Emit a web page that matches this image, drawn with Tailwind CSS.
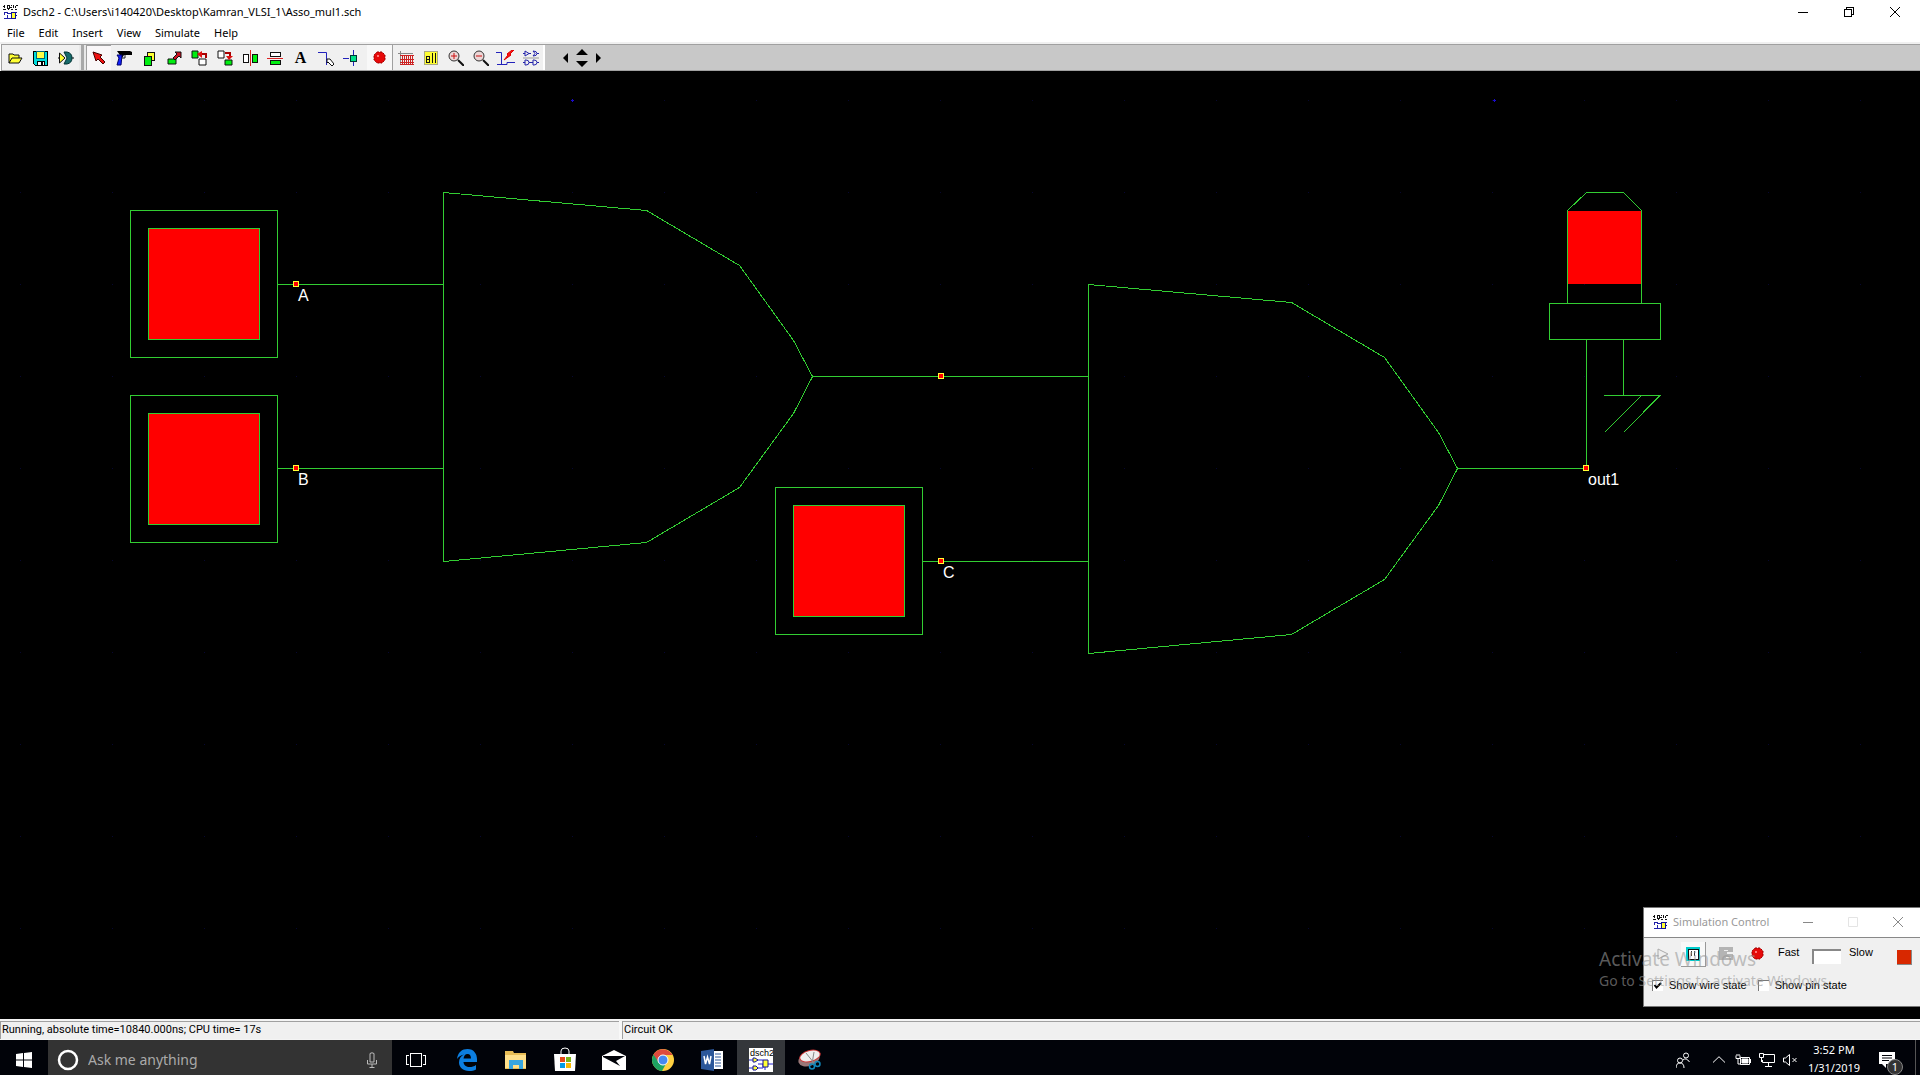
<!DOCTYPE html>
<html lang="en">
<head>
<meta charset="utf-8">
<title>Dsch2</title>
<script src="https://cdn.jsdelivr.net/npm/@tailwindcss/browser@4"></script>
</head>
<body class="flex h-screen flex-col overflow-hidden bg-black font-['Noto_Sans',sans-serif] text-[11px] text-black">

<svg class="hidden">
  <symbol id="app" viewBox="0 0 16 16" shape-rendering="crispEdges">
    <path d="M1 2h2M2 1v3M5 1h2v3H5zM8 3h2M9 1v1M11 1v3M13 2v2M14 1h1v1M1 5h3M6 5h1M9 5h2M13 5h2" stroke="#111" fill="none"/>
    <path d="M2 8h4M2 8v3M2 14h3M5 11v4M5 9h4M5 14h4" stroke="#22a" fill="none"/>
    <path d="M9 8h4v6H9z" fill="#ff3" stroke="#119"/><path d="M13 11h2M13 8h2" stroke="#119"/>
  </symbol>
  <symbol id="reddot" viewBox="0 0 16 16">
    <path d="M5 2h5l3 3v5l-3 3H5l-3-3V5z" fill="#e60a0a" stroke="#900" stroke-dasharray="2 1"/><path d="M5 5h2v2H5z" fill="#f77"/>
  </symbol>
</svg>

<header class="bg-white">
  <div class="flex h-6 items-center pr-[2px] pl-[2px]">
    <svg class="size-4"><use href="#app"/></svg>
    <h1 class="ml-[5px] flex-1">Dsch2 - C:\Users\i140420\Desktop\Kamran_VLSI_1\Asso_mul1.sch</h1>
    <div class="flex">
      <button class="flex h-5 w-[46px] items-center justify-center" aria-label="Minimize"><svg class="size-3" viewBox="0 0 12 12" shape-rendering="crispEdges"><path d="M1 6.500h10" stroke="#000"/></svg></button>
      <button class="flex h-5 w-[46px] items-center justify-center" aria-label="Restore"><svg class="size-3" viewBox="0 0 12 12" fill="none" stroke="#000" shape-rendering="crispEdges"><path d="M1.500 3.500h7v7h-7zM3.500 3.500v-2h7v7h-2"/></svg></button>
      <button class="flex h-5 w-[46px] items-center justify-center" aria-label="Close"><svg class="size-3" viewBox="0 0 12 12" stroke="#000"><path d="M1 1l10 10M11 1L1 11"/></svg></button>
    </div>
  </div>
  <nav class="flex h-[18px] items-center gap-[14px] pl-[7px]">
    <button>File</button><button>Edit</button><button>Insert</button><button>View</button><button>Simulate</button><button>Help</button>
  </nav>
</header>

<div class="flex h-[29px] items-stretch border-t-2 border-[#f0f0f0] bg-white pl-px">
  <div class="flex flex-1 border-y border-[#a0a0a0] bg-[#c8c8c8]">
    <div class="flex border-l border-[#a0a0a0] bg-[#f0f0f0]">
      <button class="flex w-[25px] items-center justify-center" aria-label="Open"><svg class="size-4" viewBox="0 0 16 16"><path d="M2 13V4h4l1 1h5v3M2 13l3-5h10l-3 5z" fill="#ff3" stroke="#111"/></svg></button>
      <button class="flex w-[25px] items-center justify-center" aria-label="Save"><svg class="size-4" viewBox="0 0 16 16" shape-rendering="crispEdges"><path d="M1 1h14v14H3l-2-2z" fill="#0dd" stroke="#000"/><path d="M4 1h8v7H4z" fill="#ff4" stroke="#067"/><path d="M5 11h7v4H5z" fill="#fff" stroke="#000"/><path d="M9 11h2v4H9z"/></svg></button>
      <button class="flex w-[27px] items-center justify-center" aria-label="Symbol"><svg class="size-4" viewBox="0 0 16 16"><path d="M0 8h2M13 8h3" stroke="#000"/><path d="M1.500 3v10L7 8z" fill="#ff3" stroke="#111"/><path d="M6 2h3q5 1 5 6t-5 6H6l3-6z" fill="#176a6a" stroke="#033"/></svg></button>
    </div>
    <div class="w-[7px] border-x-2 border-[#e8e8e8] bg-[#a8a8a8]"></div>
    <div class="flex border-r-2 border-white bg-[#f0f0f0]">
      <button class="flex w-[25px] items-center justify-center border-l border-t border-[#a0a0a0] bg-[#f9f7f8]" aria-label="Select"><svg class="size-4" viewBox="0 0 16 16"><path d="M2 2l9 3-2 2 5 5-2 2-5-5-2 2z" fill="#e11" stroke="#400"/></svg></button>
      <button class="flex w-[25px] items-center justify-center" aria-label="Delete"><svg class="size-4" viewBox="0 0 16 16"><path d="M1 1h13l2 1v3H8L6 8z"/><path d="M1 5h5L5 15H1L3 8z" fill="#12f" stroke="#006"/><path d="M6 8h3V5" stroke="#222" fill="none"/></svg></button>
      <button class="flex w-[25px] items-center justify-center" aria-label="Copy"><svg class="size-4" viewBox="0 0 16 16" stroke="#111" shape-rendering="crispEdges"><path d="M6 2h7v8H6z" fill="#ff3"/><path d="M3 6h7v9H3z" fill="#0e1"/></svg></button>
      <button class="flex w-[25px] items-center justify-center" aria-label="Move"><svg class="size-4" viewBox="0 0 16 16" stroke="#111"><path d="M2 9h8v5H2z" fill="#0e1"/><path d="M7 8l4-4-2-2h6v6l-2-2-4 4z" fill="#c12"/></svg></button>
      <button class="flex w-[26px] items-center justify-center" aria-label="Rotate left"><svg class="size-4" viewBox="0 0 16 16"><path d="M1 1h6v7H1z" fill="#0e1" stroke="#111"/><path d="M8 9h7v6H8z" fill="#fff" stroke="#111"/><path d="M15 8V4h-5" stroke="#a00" stroke-width="2" fill="none"/><path d="M11 1v7L6 4z" fill="#d11"/></svg></button>
      <button class="flex w-[25px] items-center justify-center" aria-label="Rotate right"><svg class="size-4" viewBox="0 0 16 16"><path d="M1 1h6v7H1z" fill="#fff" stroke="#111"/><path d="M8 10h7v5H8z" fill="#0e1" stroke="#111"/><path d="M8 3h5v4" stroke="#a00" stroke-width="2" fill="none"/><path d="M9 6h7l-4 4z" fill="#d11"/></svg></button>
      <button class="flex w-[25px] items-center justify-center" aria-label="Flip horizontal"><svg class="size-4" viewBox="0 0 16 16" shape-rendering="crispEdges"><path d="M1 4h5v8H1z" fill="#fff" stroke="#111"/><path d="M10 4h5v8h-5z" fill="#0e1" stroke="#111"/><path d="M8 0v16" stroke="#d22"/></svg></button>
      <button class="flex w-[26px] items-center justify-center" aria-label="Flip vertical"><svg class="size-4" viewBox="0 0 16 16" shape-rendering="crispEdges"><path d="M3 2h10v4H3z" fill="#fff" stroke="#111"/><path d="M3 10h10v4H3z" fill="#0e1" stroke="#111"/><path d="M0 8h16" stroke="#d22"/></svg></button>
      <button class="flex w-[25px] items-center justify-center font-['Liberation_Serif',serif] text-base font-bold" aria-label="Text">A</button>
      <button class="flex w-[25px] items-center justify-center" aria-label="Wire"><svg class="size-4" viewBox="0 0 16 16" fill="none"><path d="M0 2.500h8.500V15" stroke="#22b"/><path d="M9 9h3l4 5-2 2-4-4-1 1z" fill="#fff" stroke="#111"/></svg></button>
      <button class="flex w-[25px] items-center justify-center" aria-label="Connect"><svg class="size-4" viewBox="0 0 16 16" shape-rendering="crispEdges"><path d="M0 8h6M10 0v16" stroke="#22b"/><path d="M7 5h6v6H7z" fill="#0d8" stroke="#033"/></svg></button>
      <button class="ml-[4px] flex w-[26px] items-center justify-center border-r border-[#a0a0a0] bg-[#f8f8f8]" aria-label="Run simulation"><svg class="size-4"><use href="#reddot"/></svg></button>
      <button class="flex w-[25px] items-center justify-center" aria-label="Chronogram"><svg class="size-4" viewBox="0 0 16 16" shape-rendering="crispEdges"><path d="M2 1v14M0 3h15" stroke="#888"/><path d="M2 5h14M2 14h14M4 5v9M6 5v9M8 5v9M10 5v9M12 5v9M14 5v9M2 9h14M2 12h14" stroke="#c22"/></svg></button>
      <button class="flex w-[25px] items-center justify-center" aria-label="View all"><svg class="size-4" viewBox="0 0 16 16" shape-rendering="crispEdges"><path d="M1.500 1.500h13v13h-13z" fill="#ff3" stroke="#aa8"/><path d="M3 6h3v6H3zM3 9h3M9 3v10M12 3v10" fill="none" stroke="#111"/></svg></button>
      <button class="flex w-[25px] items-center justify-center" aria-label="Zoom in"><svg class="size-4" viewBox="0 0 16 16"><path d="M10 10l6 6" stroke="#111" stroke-width="2"/><circle cx="6" cy="6" r="5" fill="#ecd7d7" stroke="#333"/><path d="M3 6h6M6 3v6" stroke="#c11"/></svg></button>
      <button class="flex w-[25px] items-center justify-center" aria-label="Zoom out"><svg class="size-4" viewBox="0 0 16 16"><path d="M10 10l6 6" stroke="#111" stroke-width="2"/><circle cx="6" cy="6" r="5" fill="#ecd7d7" stroke="#333"/><path d="M3 6h6" stroke="#c11"/></svg></button>
      <button class="flex w-[25px] items-center justify-center" aria-label="Critical path"><svg class="h-4 w-5" viewBox="0 0 20 16" fill="none"><path d="M0 2.500h5.500v12H1M5 14.500h6v-2h8" stroke="#22b"/><path d="M16 0l-5 4 1 1-4 5 7-5-1-1 4-4z" fill="#f11" stroke="#d00"/></svg></button>
      <button class="flex w-[25px] items-center justify-center" aria-label="Library"><svg class="size-4" viewBox="0 0 16 16" fill="none" stroke="#22a"><path d="M2 1v5l4-2.500zM0 3.500h2M6 3.500h2M10 1q4 0 4 2.500T10 6l2-2.500zM14 3.500h2M2 10v5h1q3 0 3-2.500T3 10zM0 12.500h2M6 12.500h2M10 10v5h1q3 0 3-2.500T11 10zM8 12.500h2M14 12.500h2"/><path d="M0 8h16" stroke="#999"/></svg></button>
    </div>
    <div class="flex items-center pl-[13px]">
      <button class="flex w-4 justify-center" aria-label="Scroll left"><svg class="h-5 w-3" viewBox="0 0 12 20"><path d="M8 5v10l-5-5z"/></svg></button>
      <button class="flex w-4 justify-center" aria-label="Scroll up and down"><svg class="h-5 w-3" viewBox="0 0 12 20"><path d="M6 1l6 6H0zM6 19l6-6H0z"/></svg></button>
      <button class="flex w-4 justify-center" aria-label="Scroll right"><svg class="h-5 w-3" viewBox="0 0 12 20"><path d="M4 5v10l5-5z"/></svg></button>
    </div>
  </div>
</div>

<main class="relative min-h-0 flex-1 bg-black">
  <svg class="h-full w-full" viewBox="0 71 1920 948" preserveAspectRatio="xMinYMin meet" role="img" aria-label="Schematic">
    <defs>
      <pattern id="grid" x="20" y="8" width="92" height="92" patternUnits="userSpaceOnUse"><path d="M0 0h1v1H0z" fill="#070730"/></pattern>
      <g id="node"><path d="M-2.500-2.500h5v5h-5z" fill="#f00" stroke="#ff3"/></g>
      <g id="switch"><path d="M.5.5h147v147h-147z"/><path d="M18.500 18.500h111v111h-111z" fill="#f00"/></g>
      <path id="gate" d="M.5.5L203.500 18.500 296.500 73.500 350.500 148.500 369.500 184.500 350.500 221.500 296.500 295.500 203.500 350.500 .5 369.500z"/>
    </defs>
    <path d="M0 71h1920v948H0z" fill="url(#grid)"/>
    <path d="M571 100h3v1h-3zM572 99h1v3h-1zM1493 100h3v1h-3zM1494 99h1v3h-1z" fill="#1a0acc"/>
    <g fill="none" stroke="#32cd32" shape-rendering="crispEdges">
      <use href="#switch" x="130" y="210"/>
      <use href="#switch" x="130" y="395"/>
      <use href="#switch" x="775" y="487"/>
      <use href="#gate" x="443" y="192"/>
      <use href="#gate" x="1088" y="284"/>
      <path d="M278 284.500h165M278 468.500h165M812 376.500h276M923 561.500h165M1457 468.500h129.500V339.500"/>
      <path d="M1567.500 211h74v73h-74z" fill="#f00" stroke="none"/>
      <path d="M1567.500 303V210.500L1586.500 192.500h37L1641.500 210.500V303M1549.500 303.500h111v36h-111zM1623.500 339.500v56M1604 395.500h56L1623.500 432.500M1641.500 395.500L1604.500 432.500"/>
      <use href="#node" x="296" y="284"/>
      <use href="#node" x="296" y="468"/>
      <use href="#node" x="941" y="376"/>
      <use href="#node" x="941" y="561"/>
      <use href="#node" x="1586" y="468"/>
    </g>
    <g class="fill-white font-['Liberation_Sans',sans-serif] text-base">
      <text x="298" y="301">A</text>
      <text x="298" y="485">B</text>
      <text x="943" y="578">C</text>
      <text x="1588" y="485">out1</text>
    </g>
  </svg>

  <section class="absolute right-0 bottom-3 w-[277px] border border-r-0 border-[#777] bg-[#f0f0f0] font-['Liberation_Sans',sans-serif]" aria-label="Simulation Control">
    <div class="flex h-[30px] items-center border-b border-[#888] bg-white pb-px pl-2 font-['Noto_Sans',sans-serif] text-[#999]">
      <svg class="size-4"><use href="#app"/></svg>
      <h2 class="ml-[5px] flex-1 whitespace-nowrap">Simulation Control</h2>
      <button class="flex w-[45px] justify-center" aria-label="Minimize"><svg class="size-3" viewBox="0 0 12 12"><path d="M1 6.500h10" stroke="#888"/></svg></button>
      <button class="flex w-[45px] justify-center" aria-label="Maximize" disabled><svg class="size-3" viewBox="0 0 12 12"><path d="M1.500 1.500h9v9h-9z" fill="none" stroke="#e4e4e4"/></svg></button>
      <button class="flex w-[45px] justify-center" aria-label="Close"><svg class="size-3" viewBox="0 0 12 12"><path d="M1 1l10 10M11 1L1 11" stroke="#888"/></svg></button>
    </div>
    <div class="flex h-8 items-center pl-[6px]">
      <button class="flex size-[25px] items-center justify-center" aria-label="Run"><svg class="size-4" viewBox="0 0 16 16"><path d="M3 3v10l10-5z" fill="#eee" stroke="#aaa"/></svg></button>
      <button class="ml-[6px] flex size-[25px] items-center justify-center border-r border-b border-[#999] bg-[#f8f8f8]" aria-label="Pause"><svg class="size-4" viewBox="0 0 16 16" shape-rendering="crispEdges"><path d="M1 1h14v14H1z" fill="#0cc"/><path d="M3 3h10v10H3z" fill="#fff" stroke="#111"/><path d="M6 5h1v5H6zM9 5h1v5H9z" fill="#333"/></svg></button>
      <button class="ml-[7px] flex size-[25px] items-center justify-center" aria-label="Step"><svg class="size-4" viewBox="0 0 16 16" shape-rendering="crispEdges"><path d="M1 1h14v5H9v2h6v6H1z" fill="#b4b4b4"/><path d="M6 4h4M8 11h5" stroke="#eee"/></svg></button>
      <button class="ml-[7px] flex size-[25px] items-center justify-center" aria-label="Stop"><svg class="size-4"><use href="#reddot"/></svg></button>
      <label for="speed" class="ml-[8px] w-[34px] pb-1">Fast</label>
      <input id="speed" type="text" class="mt-1 h-[15px] w-[29px] border-t-2 border-l-2 border-[#888] bg-white">
      <label for="speed" class="ml-[8px] w-[48px] pb-1">Slow</label>
      <button class="mt-[6px] size-[15px] border-r border-b border-[#888] bg-[#d82800]" aria-label="State"></button>
    </div>
    <div class="flex h-9 items-center gap-[11px] pb-[6px] pl-[8px]">
      <label class="flex items-center gap-[6px]"><span class="grid"><input type="checkbox" checked class="col-start-1 row-start-1 size-[11px] appearance-none border-t border-l border-[#777] bg-white"><svg class="pointer-events-none col-start-1 row-start-1 size-[11px]" viewBox="0 0 11 11"><path d="M2.500 5l2 2.500L9 3" fill="none" stroke="#000" stroke-width="2"/></svg></span>Show wire state</label>
      <label class="flex items-center gap-[6px]"><input type="checkbox" class="size-[11px] appearance-none border-t border-l border-[#777] bg-white">Show pin state</label>
    </div>
  </section>

  <div class="pointer-events-none absolute right-[90px] bottom-[28px] w-[231px] whitespace-nowrap text-[#999]/60">
    <p class="text-[19px] leading-6">Activate Windows</p>
    <p class="text-sm leading-5">Go to Settings to activate Windows.</p>
  </div>
</main>

<div class="flex h-[21px] gap-[3px] border-t-2 border-b border-[#f4f4f4] bg-[#f8f8f8] font-[Roboto,sans-serif]">
  <p class="flex w-[619px] items-center border-t border-l border-[#a0a0a0] bg-[#f0f0f0] pl-px">Running, absolute time=10840.000ns; CPU time= 17s</p>
  <p class="flex flex-1 items-center border-t border-l border-[#a0a0a0] bg-[#f0f0f0] pl-px">Circuit OK</p>
</div>

<footer class="flex h-[35px] items-center bg-[#010309] text-white">
  <button class="flex w-12 items-center justify-center pt-[4px]" aria-label="Start"><svg class="size-4" viewBox="0 0 16 16" fill="#fff"><path d="M0 2l7-1v6.500H0zM8 1l8-1v7.500H8zM0 8.500h7V15l-7-1zM8 8.500h8V16l-8-1z"/></svg></button>
  <label class="flex h-full w-[344px] items-center bg-[#333] pt-[5px] pl-[9px]">
    <svg class="size-[22px]" viewBox="0 0 22 22"><circle cx="11" cy="11" r="9" fill="none" stroke="#fff" stroke-width="2.500"/></svg>
    <input type="text" placeholder="Ask me anything" aria-label="Search" class="ml-[9px] w-0 flex-1 bg-transparent text-sm outline-none placeholder:text-[#aaa]">
    <svg class="mr-[14px] h-4 w-3" viewBox="0 0 12 16" fill="none" stroke="#bbb"><path d="M4 1.500q2-1.500 4 0V10H4zM1.500 8v4h9V8M6 12v3.500M3.500 15.500h5"/></svg>
  </label>
  <div class="flex h-full">
    <button class="flex w-12 items-center justify-center pt-[4px]" aria-label="Task view"><svg class="h-[14px] w-5" viewBox="0 0 20 14" fill="none" stroke="#fff" shape-rendering="crispEdges"><path d="M4.500.5h11v13h-11zM3 2.500H.5v9H3M17 2.500h2.500v9H17"/></svg></button>
    <button class="ml-[2px] flex w-[49px] items-center justify-center pt-[4px]" aria-label="Edge"><svg class="size-[22px]" viewBox="0 0 22 22"><path d="M1 10C2 3 6 0 11.500 0 18 0 21 5 21 10v3H7.500c0 3 3 5 6 5 2.500 0 4.500-.5 6.500-2v4.500C18 21.500 16 22 13 22 7 22 3 18 3 13.500c0-4 2-6.500 5-8-3.500.5-5.500 2.500-7 4.500zM7.500 9.500H15C15 7 14 5 11.500 5S8 7 7.500 9.500z" fill="#0c7ee0"/></svg></button>
    <button class="flex w-[49px] items-center justify-center pt-[4px]" aria-label="File Explorer"><svg class="size-[22px]" viewBox="0 0 22 22"><path d="M0 2h8l1 2h12v16H0z" fill="#e8bd55"/><path d="M0 6h21v13H0z" fill="#ffe08a"/><path d="M4 20v-9h14v9h-4v-4H8v4z" fill="#37a6e0"/></svg></button>
    <button class="flex w-[49px] items-center justify-center pt-[2px]" aria-label="Store"><svg class="size-6" viewBox="0 0 24 24"><path d="M8 7V4q0-3 4-3t4 3v3" fill="none" stroke="#fff"/><path d="M1 7h22l-1 17H2z" fill="#fff"/><path d="M7 10h5v5H7z" fill="#e64a19"/><path d="M13 10h5v5h-5z" fill="#7cb518"/><path d="M7 16h5v5H7z" fill="#039be5"/><path d="M13 16h5v5h-5z" fill="#fbb800"/></svg></button>
    <button class="flex w-[49px] items-center justify-center pt-[4px]" aria-label="Mail"><svg class="h-5 w-6" viewBox="0 0 24 20"><path d="M0 6L12 0l12 6v14H0z" fill="#fff"/><path d="M1 6h22l-9 5 4 5L1 7z" fill="#010309"/></svg></button>
    <button class="flex w-[49px] items-center justify-center pt-[4px]" aria-label="Chrome"><svg class="size-[22px]" viewBox="0 0 22 22"><circle cx="11" cy="11" r="11" fill="#ffd041"/><path d="M11 11L1.500 5.500A11 11 0 0 0 10 22l5-9z" fill="#1da362"/><path d="M1.500 5.500A11 11 0 0 1 20.500 6H11l-4.500 7z" fill="#dd4b3e"/><circle cx="11" cy="11" r="5" fill="#4688f1" stroke="#fff"/></svg></button>
    <button class="flex w-[49px] items-center justify-center pt-[4px]" aria-label="Word"><svg class="size-[22px]" viewBox="0 0 22 22"><path d="M11 2h11v18H11z" fill="#fff"/><path d="M14 5h6M14 8h6M14 11h6M14 14h6M14 17h6" stroke="#2b579a"/><path d="M0 2l13-2v22L0 20z" fill="#2b579a"/><path d="M3 7l1.500 8L6.500 8l2 7L10 7" fill="none" stroke="#fff" stroke-width="1.500"/></svg></button>
    <button class="ml-px flex w-12 items-center justify-center bg-[#34373b] pt-[4px]" aria-label="Dsch2"><svg class="size-6" viewBox="0 0 24 24"><path d="M0 0h24v24H0z" fill="#fff"/><text x="1" y="8" class="font-['Liberation_Sans',sans-serif] text-[9px]">dsch2</text><path d="M0 12h4M8 12h6M0 20h4M9 20h5v-4M19 16h5M16 22v-3M9 16h5" stroke="#22c" fill="none"/><path d="M4 10h2l3 2-3 2H4zM4 18h3l2 2-2 2H4zM14 12h5v7h-5z" fill="#ff3" stroke="#119"/></svg></button>
    <button class="flex w-[49px] items-center justify-center pt-[4px]" aria-label="Snipping Tool"><svg class="size-6" viewBox="0 0 24 24"><ellipse cx="11" cy="11" rx="11" ry="7" fill="#977" transform="rotate(-20 11 11)"/><ellipse cx="12" cy="8" rx="11" ry="6" fill="#c33" transform="rotate(-15 12 8)"/><ellipse cx="12" cy="8" rx="10" ry="5" fill="#eee" transform="rotate(-15 12 8)"/><path d="M8 5l8 10M16 4l-2 12" stroke="#888"/><g fill="none" stroke="#18b" stroke-width="1.500"><circle cx="14" cy="18.500" r="2.500"/><circle cx="19.500" cy="16" r="2.500"/></g></svg></button>
  </div>
  <div class="ml-auto flex h-full items-center">
    <svg class="mt-[4px] h-4 w-[14px]" viewBox="0 0 14 16" fill="none" stroke="#fff"><circle cx="10" cy="3.500" r="2.500"/><circle cx="4" cy="8.500" r="2.500"/><path d="M0 16q0-5 4-5t4 5M7 8q3-3 6.500 2"/></svg>
    <svg class="mt-[4px] ml-[23px] h-[7px] w-3" viewBox="0 0 12 7" fill="none" stroke="#fff"><path d="M0 6.500L6 .7l6 5.800"/></svg>
    <svg class="mt-[4px] ml-[10px] h-3 w-4" viewBox="0 0 16 12" fill="none" stroke="#fff"><path d="M5.500 3.500h9v7h-9zM1 1.500v3h4v-3M3 4v6h3M2 0v2M4 0v2M15.500 5v4"/><path d="M7 5h6v4H7z" fill="#fff"/></svg>
    <svg class="mt-[4px] ml-[8px] h-[14px] w-4" viewBox="0 0 16 14" fill="none" stroke="#fff"><path d="M5 1.500h10.500v8h-12V7M.5.5h4v4h-4zM2.500 5v4M9.500 10v3M6 13.500h7"/></svg>
    <svg class="mt-[4px] ml-[8px] h-3 w-[15px]" viewBox="0 0 15 12" fill="none" stroke="#fff"><path d="M.5 4h2l4-3.500v11L2.500 8h-2zM9.500 4l4 4M13.500 4l-4 4"/></svg>
    <div class="ml-[7px] w-[58px] pt-[3px] text-center leading-[18px]"><p>3:52 PM</p><p>1/31/2019</p></div>
    <button class="relative ml-4 mr-[12px] flex h-full w-6 pt-[12px]" aria-label="Notifications"><svg class="size-4" viewBox="0 0 16 16"><path d="M0 0h16v12H7v4l-4-4H0z" fill="#fff"/><path d="M3 3.500h10M3 6h10M3 8.500h7" stroke="#010309"/></svg><span class="absolute bottom-0 left-2 flex size-4 items-center justify-center rounded-full border border-[#888] bg-[#333] leading-4">1</span></button>
    <span class="h-full w-[5px] border-l border-[#555]"></span>
  </div>
</footer>
</body>
</html>
